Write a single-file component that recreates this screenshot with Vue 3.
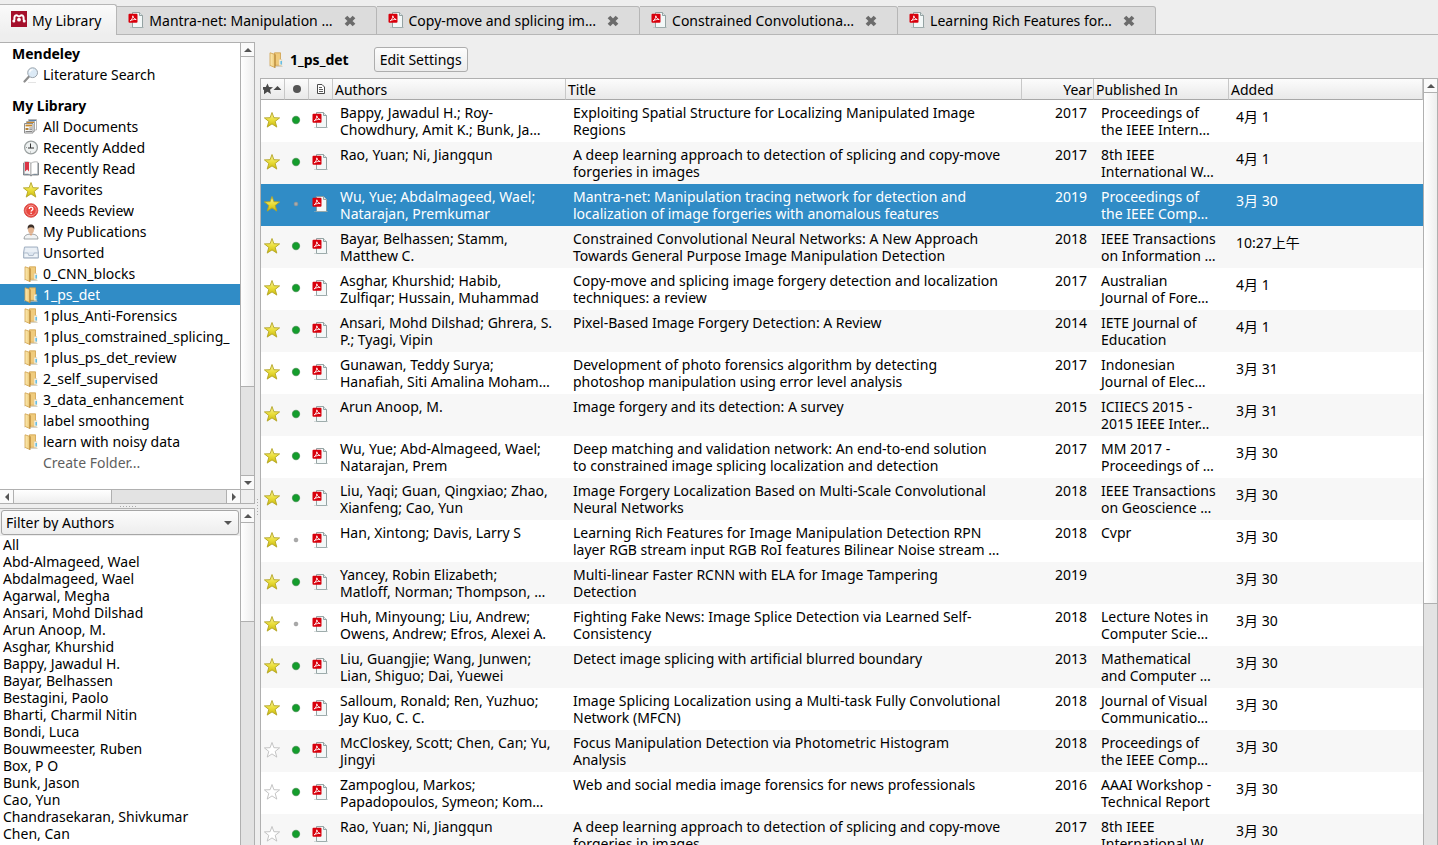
<template>
  <div class="app">
    <svg class="sprite" aria-hidden="true">
      <defs>
        <linearGradient id="g-star" x1="0" y1="0" x2="0" y2="1">
          <stop offset="0" stop-color="#f7f3a0" />
          <stop offset="0.5" stop-color="#ebdf3c" />
          <stop offset="1" stop-color="#c9b80c" />
        </linearGradient>
        <linearGradient id="g-folder" x1="0" y1="0" x2="1" y2="0">
          <stop offset="0" stop-color="#fdedb8" />
          <stop offset="1" stop-color="#ecc670" />
        </linearGradient>
        <radialGradient id="g-dot">
          <stop offset="0" stop-color="#12a02c" />
          <stop offset="0.7" stop-color="#159a2c" />
          <stop offset="1" stop-color="#7fa886" />
        </radialGradient>
        <radialGradient id="g-red">
          <stop offset="0" stop-color="#f04a40" />
          <stop offset="1" stop-color="#e2433c" />
        </radialGradient>
      </defs>
      <symbol id="i-logo" viewBox="0 0 16 16">
        <rect width="16" height="16" fill="#a50f2b" />
        <path d="M3.500 9C3 6 3.900 4.200 5.300 4.200S7.200 5.400 8 5.400s1.300-1.200 2.700-1.200S13 6 12.500 9" fill="none" stroke="#fff" stroke-width="2" />
        <circle cx="2.800" cy="9.900" r="1.500" fill="#fff" />
        <circle cx="8" cy="8.700" r="1.900" fill="#fff" />
        <circle cx="13.200" cy="9.900" r="1.500" fill="#fff" />
      </symbol>
      <symbol id="i-pdf" viewBox="0 0 16 16">
        <path d="M4.500 .5h7L14.500 3.500v12h-10z" fill="#f3f8f8" stroke="#8a9a9a" stroke-width=".9" />
        <path d="M11.500 .5v3h3" fill="#dfe8e8" stroke="#8a9a9a" stroke-width=".9" />
        <path d="M2 15.700h14" stroke="#a8b5b5" stroke-width=".6" />
        <rect x=".5" y="1.700" width="9" height="9" rx="1" fill="#d8000c" />
        <path d="M2.200 8.800C3.800 7.800 4.800 5.700 4.800 3.800c.5 2 1.500 3.200 3.400 3.700-2-.2-4 .2-6 1.300z" fill="none" stroke="#fff" stroke-width=".9" />
      </symbol>
      <symbol id="i-search" viewBox="0 0 16 16">
        <path d="M1.500 14.500 5.800 9.800" stroke="#8d8d8d" stroke-width="2.200" stroke-linecap="round" />
        <circle cx="9.600" cy="5.700" r="4.900" fill="#dceaf6" stroke="#9aa3ab" />
        <path d="M6.700 5.500a3 3 0 0 1 3-2.900" fill="none" stroke="#fff" stroke-width="1.200" />
        <path d="M5 15.500h8" stroke="#e4e4e4" />
      </symbol>
      <symbol id="i-docs" viewBox="0 0 16 16">
        <path d="M5.500 .5h8v10.500h-8z" fill="#fff" stroke="#b5b5b5" />
        <path d="M6 1.500h7" stroke="#5b7fa6" />
        <path d="M3.500 2.500h8v10h-8z" fill="#fff" stroke="#a9a9a9" />
        <path d="M4 3.500h7" stroke="#c98a2c" />
        <path d="M1.500 4.500h8.500v9.500h-8.500z" fill="#fafafa" stroke="#8f8f8f" />
        <path d="M2.500 6.500h6.500" stroke="#c98a2c" stroke-width="1.800" />
        <path d="M2.500 10h3" stroke="#b5853a" stroke-width="2" />
        <path d="M2.500 12.500h6.500M6.300 9h2.700M6.300 10.700h2.700" stroke="#777" stroke-width=".9" />
      </symbol>
      <symbol id="i-clock" viewBox="0 0 16 16">
        <circle cx="8" cy="7.500" r="6.400" fill="#eef1f1" stroke="#9ba1a1" stroke-width="1.300" />
        <path d="M7.500 3.500V8M5 8h6" stroke="#333" fill="none" />
        <path d="M7.500 11.500v1M3 7.500h1" stroke="#999" />
      </symbol>
      <symbol id="i-book" viewBox="0 0 16 16">
        <path d="M.5 2v12h6L8 15l1.500-1h6V2" fill="#5d86ad" stroke="#777" stroke-width=".8" />
        <path d="M1.200 1C4 .5 6.500 1 8 2.200v12C6 13 4 12.900 1.200 13.300z" fill="#f6f6f6" stroke="#999" stroke-width=".7" />
        <path d="M14.800 1C12 .5 9.500 1 8 2.200v12c2-1.200 4-1.300 6.800-.9z" fill="#fff" stroke="#999" stroke-width=".7" />
        <path d="M2 1h4v9.500L4.200 8.500 2 10.500z" fill="#db3545" />
      </symbol>
      <symbol id="i-star" viewBox="0 0 16 16">
        <path d="M8 .5 9.900 5.700l5.700.2-4.400 3.500 1.600 5.700L8 11.900l-4.800 3.200 1.600-5.700L.4 5.900l5.700-.2z" fill="url(#g-star)" stroke="#b3a524" stroke-width=".9" stroke-linejoin="round" />
      </symbol>
      <symbol id="i-star-off" viewBox="0 0 16 16">
        <path d="M8 .5 9.900 5.700l5.700.2-4.400 3.500 1.600 5.700L8 11.900l-4.800 3.200 1.600-5.700L.4 5.900l5.700-.2z" fill="#fff" stroke="#bdbdbd" stroke-width=".9" stroke-linejoin="round" />
      </symbol>
      <symbol id="i-help" viewBox="0 0 16 16">
        <circle cx="8" cy="7.500" r="6.800" fill="url(#g-red)" stroke="#d5403a" stroke-width=".8" />
        <circle cx="8" cy="7.500" r="5.300" fill="none" stroke="#f7a39e" stroke-width=".8" />
        <path d="M6.200 6C6.200 4.800 7 4.200 8 4.200s1.900.6 1.900 1.700c0 1.300-1.800 1.300-1.800 2.700M8.100 9.700v1.300" fill="none" stroke="#fff" stroke-width="1.300" />
      </symbol>
      <symbol id="i-user" viewBox="0 0 16 16">
        <path d="M1 15c0-3.500 2.500-4.500 5-4.800h4c2.500.3 5 1.300 5 4.800z" fill="#f1f3f4" stroke="#8b8f92" stroke-width=".8" />
        <path d="M6.300 9.500 8 12l1.700-2.500z" fill="#d9a27c" />
        <ellipse cx="8" cy="5.500" rx="3" ry="4" fill="#e3b491" />
        <path d="M4.800 5.500C4.200 2 5.600.6 8 .6s3.800 1.400 3.200 4.900C10.700 4 10 3.200 8 3.200s-2.700.8-3.200 2.300z" fill="#3d3029" />
      </symbol>
      <symbol id="i-tray" viewBox="0 0 16 16">
        <path d="M1.500 2h13l1 6v5H.5v-5z" fill="#dce5ef" stroke="#a3b1c2" />
        <path d="M2.500 4h11M2 6h12" stroke="#f8fafc" />
        <path d="M.8 8h4l1 2.500h4.400l1-2.500h4v4.700H.8z" fill="#eef3f8" stroke="#a3b1c2" stroke-width=".8" />
      </symbol>
      <symbol id="i-folder" viewBox="0 0 16 16">
        <path d="M6.500 .8h6v12.500h-6z" fill="#f0cb7c" stroke="#cf9f4a" stroke-width=".8" />
        <path d="M11 7.500h2.700v6H11z" fill="#f8f0dc" stroke="#d8c9a2" stroke-width=".5" />
        <path d="M12.500 9h1.300v3.500h-1.300z" fill="#45b4ec" />
        <path d="M2 .8 7 2.400v13.200L2 13.400z" fill="url(#g-folder)" stroke="#cf9f4a" stroke-width=".8" />
        <path d="M7 2.400v13.200" stroke="#a87c2f" stroke-width=".9" />
        <path d="M7.500 14.500h7M1 13.800h1" stroke="#c9c1ae" stroke-width=".7" />
      </symbol>
      <symbol id="i-close" viewBox="0 0 12 12">
        <path d="M2 2 10 10M10 2 2 10" stroke="#6b6b6b" stroke-width="3.800" />
      </symbol>
      <symbol id="i-page" viewBox="0 0 10 12">
        <path d="M1.500 1.500h4.500L8.500 4v6.500h-7z" fill="#fff" stroke="#4a4a4a" />
        <path d="M3 4.500h3M3 6.500h4M3 8.500h4" stroke="#4a4a4a" stroke-width=".9" />
      </symbol>
      <symbol id="i-read" viewBox="0 0 10 10">
        <circle cx="5" cy="5" r="4.200" fill="url(#g-dot)" />
      </symbol>
      <symbol id="i-unread" viewBox="0 0 10 10">
        <circle cx="5" cy="5" r="1.900" fill="#a9a9a9" stroke="#8f8f8f" stroke-width=".6" />
      </symbol>
    </svg>

    <nav class="tabs">
      <div class="tab active">
        <button type="button" class="tab-label">
          <svg class="icon"><use href="#i-logo" /></svg>
          <span>My Library</span>
        </button>
      </div>
      <div v-for="tab in tabs" :key="tab" class="tab">
        <button type="button" class="tab-label">
          <svg class="icon"><use href="#i-pdf" /></svg>
          <span>{{ tab }}</span>
        </button>
        <button type="button" class="tab-close" aria-label="Close tab">
          <svg><use href="#i-close" /></svg>
        </button>
      </div>
      <div class="tabs-rest"></div>
    </nav>

    <div class="body">
      <aside class="sidebar">
        <section class="panel tree-panel">
          <div class="panel-row">
            <div class="tree">
              <h2>Mendeley</h2>
              <button type="button" class="tree-item">
                <svg class="icon"><use href="#i-search" /></svg>
                <span>Literature Search</span>
              </button>
              <h2 class="spaced">My Library</h2>
              <button
                v-for="item in library"
                :key="item.label"
                type="button"
                class="tree-item"
                :class="{ selected: item.label === selectedFolder }"
                @click="selectedFolder = item.label"
              >
                <svg class="icon"><use :href="'#i-' + item.icon" /></svg>
                <span>{{ item.label }}</span>
              </button>
              <button type="button" class="tree-item create">
                <span>Create Folder...</span>
              </button>
            </div>
            <div class="scroll">
              <button type="button" class="arrow up" aria-label="Scroll up"></button>
              <div class="track"><div class="thumb tree-thumb"></div></div>
              <button type="button" class="arrow down" aria-label="Scroll down"></button>
            </div>
          </div>
          <div class="hscroll">
            <button type="button" class="arrow left" aria-label="Scroll left"></button>
            <div class="track"><div class="thumb"></div></div>
            <button type="button" class="arrow right" aria-label="Scroll right"></button>
            <div class="corner"></div>
          </div>
        </section>

        <div class="splitter"><i v-for="n in 6" :key="n"></i></div>

        <section class="panel filter-panel">
          <div class="filter">
            <div class="filter-head">
              <select v-model="filterBy" aria-label="Filter">
                <option>Filter by Authors</option>
                <option>Filter by Author Keywords</option>
                <option>Filter by My Tags</option>
                <option>Filter by Publications</option>
              </select>
            </div>
            <ul class="authors">
              <li v-for="name in authors" :key="name">
                <button type="button">{{ name }}</button>
              </li>
            </ul>
          </div>
          <div class="scroll">
            <button type="button" class="arrow up" aria-label="Scroll up"></button>
            <div class="track"><div class="thumb author-thumb"></div></div>
          </div>
        </section>
      </aside>

      <div class="vsplitter"><i v-for="n in 6" :key="n"></i></div>

      <main class="main">
        <header class="main-head">
          <svg class="icon"><use href="#i-folder" /></svg>
          <h1>{{ selectedFolder }}</h1>
          <button type="button" class="settings">Edit Settings</button>
        </header>

        <div class="grid">
          <div class="grid-view">
            <table>
              <colgroup>
                <col class="c-icon" />
                <col class="c-icon" />
                <col class="c-icon" />
                <col class="c-authors" />
                <col class="c-title" />
                <col class="c-year" />
                <col class="c-pub" />
                <col />
              </colgroup>
              <thead>
                <tr>
                  <th class="h-fav" aria-label="Favorite">
                    <svg class="h-star" viewBox="0 0 18 12">
                      <path d="M4.500 .5 6 4l4 .3-3 2.500 1 4.200-3.500-2.200L1 11.200 1 7 0 6.500V4h2.800z" fill="#4a4a4a" />
                      <path d="M10.500 7h8L14.500 3z" fill="#4a4a4a" />
                    </svg>
                  </th>
                  <th aria-label="Read">
                    <svg class="h-dot" viewBox="0 0 10 10"><circle cx="5" cy="5" r="4" fill="#555" /></svg>
                  </th>
                  <th aria-label="File">
                    <svg class="h-page"><use href="#i-page" /></svg>
                  </th>
                  <th>Authors</th>
                  <th>Title</th>
                  <th class="year">Year</th>
                  <th>Published In</th>
                  <th>Added</th>
                </tr>
              </thead>
              <tbody>
                <tr v-for="(doc, i) in documents" :key="i" :class="{ selected: i === selectedRow }" @click="selectedRow = i">
                  <td class="mark">
                    <button type="button" aria-label="Favorite" @click.stop="doc.fav = !doc.fav">
                      <svg class="star"><use :href="doc.fav ? '#i-star' : '#i-star-off'" /></svg>
                    </button>
                  </td>
                  <td class="mark">
                    <svg class="dot"><use :href="doc.read ? '#i-read' : '#i-unread'" /></svg>
                  </td>
                  <td class="mark">
                    <svg class="pdf"><use href="#i-pdf" /></svg>
                  </td>
                  <td><div class="lines">{{ doc.authors }}</div></td>
                  <td><div class="lines">{{ doc.title }}</div></td>
                  <td class="year">{{ doc.year }}</td>
                  <td><div class="lines">{{ doc.pub }}</div></td>
                  <td class="added">{{ doc.added }}</td>
                </tr>
              </tbody>
            </table>
          </div>
          <div class="scroll">
            <button type="button" class="arrow up" aria-label="Scroll up"></button>
            <div class="track"><div class="thumb grid-thumb"></div></div>
          </div>
        </div>
      </main>
    </div>
  </div>
</template>

<script setup>
import { ref } from 'vue';

const selectedFolder = ref('1_ps_det');
const selectedRow = ref(2);
const filterBy = ref('Filter by Authors');

const tabs = [
  'Mantra-net: Manipulation …',
  'Copy-move and splicing im…',
  'Constrained Convolutiona…',
  'Learning Rich Features for…'
];

const library = [
  { icon: 'docs', label: 'All Documents' },
  { icon: 'clock', label: 'Recently Added' },
  { icon: 'book', label: 'Recently Read' },
  { icon: 'star', label: 'Favorites' },
  { icon: 'help', label: 'Needs Review' },
  { icon: 'user', label: 'My Publications' },
  { icon: 'tray', label: 'Unsorted' },
  { icon: 'folder', label: '0_CNN_blocks' },
  { icon: 'folder', label: '1_ps_det' },
  { icon: 'folder', label: '1plus_Anti-Forensics' },
  { icon: 'folder', label: '1plus_comstrained_splicing_' },
  { icon: 'folder', label: '1plus_ps_det_review' },
  { icon: 'folder', label: '2_self_supervised' },
  { icon: 'folder', label: '3_data_enhancement' },
  { icon: 'folder', label: 'label smoothing' },
  { icon: 'folder', label: 'learn with noisy data' }
];

const authors = [
  'All',
  'Abd-Almageed, Wael',
  'Abdalmageed, Wael',
  'Agarwal, Megha',
  'Ansari, Mohd Dilshad',
  'Arun Anoop, M.',
  'Asghar, Khurshid',
  'Bappy, Jawadul H.',
  'Bayar, Belhassen',
  'Bestagini, Paolo',
  'Bharti, Charmil Nitin',
  'Bondi, Luca',
  'Bouwmeester, Ruben',
  'Box, P O',
  'Bunk, Jason',
  'Cao, Yun',
  'Chandrasekaran, Shivkumar',
  'Chen, Can',
  'Chen, Chen'
];

const documents = ref([
  { fav: true, read: true, authors: 'Bappy, Jawadul H.; Roy-\nChowdhury, Amit K.; Bunk, Ja…', title: 'Exploiting Spatial Structure for Localizing Manipulated Image\nRegions', year: 2017, pub: 'Proceedings of\nthe IEEE Intern…', added: '4月 1' },
  { fav: true, read: true, authors: 'Rao, Yuan; Ni, Jiangqun', title: 'A deep learning approach to detection of splicing and copy-move\nforgeries in images', year: 2017, pub: '8th IEEE\nInternational W…', added: '4月 1' },
  { fav: true, read: false, authors: 'Wu, Yue; Abdalmageed, Wael;\nNatarajan, Premkumar', title: 'Mantra-net: Manipulation tracing network for detection and\nlocalization of image forgeries with anomalous features', year: 2019, pub: 'Proceedings of\nthe IEEE Comp…', added: '3月 30' },
  { fav: true, read: true, authors: 'Bayar, Belhassen; Stamm,\nMatthew C.', title: 'Constrained Convolutional Neural Networks: A New Approach\nTowards General Purpose Image Manipulation Detection', year: 2018, pub: 'IEEE Transactions\non Information …', added: '10:27上午' },
  { fav: true, read: true, authors: 'Asghar, Khurshid; Habib,\nZulfiqar; Hussain, Muhammad', title: 'Copy-move and splicing image forgery detection and localization\ntechniques: a review', year: 2017, pub: 'Australian\nJournal of Fore…', added: '4月 1' },
  { fav: true, read: true, authors: 'Ansari, Mohd Dilshad; Ghrera, S.\nP.; Tyagi, Vipin', title: 'Pixel-Based Image Forgery Detection: A Review', year: 2014, pub: 'IETE Journal of\nEducation', added: '4月 1' },
  { fav: true, read: true, authors: 'Gunawan, Teddy Surya;\nHanafiah, Siti Amalina Moham…', title: 'Development of photo forensics algorithm by detecting\nphotoshop manipulation using error level analysis', year: 2017, pub: 'Indonesian\nJournal of Elec…', added: '3月 31' },
  { fav: true, read: true, authors: 'Arun Anoop, M.', title: 'Image forgery and its detection: A survey', year: 2015, pub: 'ICIIECS 2015 -\n2015 IEEE Inter…', added: '3月 31' },
  { fav: true, read: true, authors: 'Wu, Yue; Abd-Almageed, Wael;\nNatarajan, Prem', title: 'Deep matching and validation network: An end-to-end solution\nto constrained image splicing localization and detection', year: 2017, pub: 'MM 2017 -\nProceedings of …', added: '3月 30' },
  { fav: true, read: true, authors: 'Liu, Yaqi; Guan, Qingxiao; Zhao,\nXianfeng; Cao, Yun', title: 'Image Forgery Localization Based on Multi-Scale Convolutional\nNeural Networks', year: 2018, pub: 'IEEE Transactions\non Geoscience …', added: '3月 30' },
  { fav: true, read: false, authors: 'Han, Xintong; Davis, Larry S', title: 'Learning Rich Features for Image Manipulation Detection RPN\nlayer RGB stream input RGB RoI features Bilinear Noise stream …', year: 2018, pub: 'Cvpr', added: '3月 30' },
  { fav: true, read: true, authors: 'Yancey, Robin Elizabeth;\nMatloff, Norman; Thompson, …', title: 'Multi-linear Faster RCNN with ELA for Image Tampering\nDetection', year: 2019, pub: '', added: '3月 30' },
  { fav: true, read: false, authors: 'Huh, Minyoung; Liu, Andrew;\nOwens, Andrew; Efros, Alexei A.', title: 'Fighting Fake News: Image Splice Detection via Learned Self-\nConsistency', year: 2018, pub: 'Lecture Notes in\nComputer Scie…', added: '3月 30' },
  { fav: true, read: true, authors: 'Liu, Guangjie; Wang, Junwen;\nLian, Shiguo; Dai, Yuewei', title: 'Detect image splicing with artificial blurred boundary', year: 2013, pub: 'Mathematical\nand Computer …', added: '3月 30' },
  { fav: true, read: true, authors: 'Salloum, Ronald; Ren, Yuzhuo;\nJay Kuo, C. C.', title: 'Image Splicing Localization using a Multi-task Fully Convolutional\nNetwork (MFCN)', year: 2018, pub: 'Journal of Visual\nCommunicatio…', added: '3月 30' },
  { fav: false, read: true, authors: 'McCloskey, Scott; Chen, Can; Yu,\nJingyi', title: 'Focus Manipulation Detection via Photometric Histogram\nAnalysis', year: 2018, pub: 'Proceedings of\nthe IEEE Comp…', added: '3月 30' },
  { fav: false, read: true, authors: 'Zampoglou, Markos;\nPapadopoulos, Symeon; Kom…', title: 'Web and social media image forensics for news professionals', year: 2016, pub: 'AAAI Workshop -\nTechnical Report', added: '3月 30' },
  { fav: false, read: true, authors: 'Rao, Yuan; Ni, Jiangqun', title: 'A deep learning approach to detection of splicing and copy-move\nforgeries in images', year: 2017, pub: '8th IEEE\nInternational W…', added: '3月 30' }
]);
</script>

<style>
body {
  background: #eee;
}
</style>

<style scoped>
.app {
  display: flex;
  flex-direction: column;
  height: 100vh;
  overflow: hidden;
  background: #eee;
  color: #000;
  font-family: "Noto Sans", "Noto Sans CJK SC", sans-serif;
  font-size: 14px;
  line-height: 17px;
}
.app *,
.app *::before {
  box-sizing: border-box;
}
.sprite {
  position: absolute;
  width: 0;
  height: 0;
}
svg {
  display: block;
  flex: none;
}
.icon {
  width: 16px;
  height: 16px;
}
button {
  margin: 0;
  padding: 0;
  border: 0;
  background: none;
  color: inherit;
  font: inherit;
  text-align: left;
}
h1,
h2 {
  margin: 0;
  font-size: 14px;
  font-weight: 700;
}

/* tabs */
.tabs {
  display: flex;
  align-items: flex-end;
  height: 35px;
  flex: none;
}
.tab {
  display: flex;
  align-items: center;
  gap: 11px;
  height: 29px;
  padding: 0 20px 0 11px;
  border: 1px solid #b6b6b6;
  border-left: 0;
  border-radius: 0 3px 0 0;
  background: #dcdcdc;
  white-space: nowrap;
}
.tab.active {
  height: 31px;
  padding: 0 15px 0 11px;
  border-bottom: 0;
  background: linear-gradient(#fafafa, #eee);
}
.tab-label {
  display: flex;
  align-items: center;
  gap: 5px;
}
.tab-label .icon {
  margin-bottom: 2px;
}
.tab-close svg {
  width: 12px;
  height: 12px;
}
.tabs-rest {
  flex: 1;
  align-self: stretch;
  border-bottom: 1px solid #b6b6b6;
}

.body {
  display: flex;
  flex: 1;
  min-height: 0;
}
.sidebar {
  display: flex;
  flex-direction: column;
  flex: none;
  width: 255px;
  padding-top: 7px;
}
.panel {
  border-top: 1px solid #b0b0b0;
  border-right: 1px solid #b0b0b0;
  background: #fff;
}
.tree-panel {
  flex: none;
  border-bottom: 1px solid #b0b0b0;
}
.panel-row {
  display: flex;
}
.tree {
  flex: 1;
  min-width: 0;
  padding-bottom: 16px;
}
.tree h2 {
  padding: 2px 12px;
}
.tree h2.spaced {
  margin-top: 10px;
}
.tree-item {
  display: flex;
  align-items: center;
  gap: 4px;
  width: 100%;
  height: 21px;
  padding: 0 7px 0 23px;
  overflow: hidden;
  white-space: nowrap;
}
.tree-item span {
  overflow: hidden;
  line-height: 21px;
}
.tree-item.selected {
  background: #308cc6;
  color: #fff;
}
.tree-item.create {
  padding-left: 43px;
  color: #5f5f5f;
}

/* scroll bars */
.scroll {
  display: flex;
  flex-direction: column;
  flex: none;
  width: 14px;
  border-left: 1px solid #b0b0b0;
  background: #e3e3e3;
}
.arrow {
  display: flex;
  align-items: center;
  justify-content: center;
  flex: none;
  height: 14px;
  background: #fafafa;
}
.arrow::before {
  content: "";
  border: 4px solid transparent;
}
.arrow.up {
  border-bottom: 1px solid #b0b0b0;
}
.arrow.up::before {
  border-top-width: 0;
  border-bottom-color: #555;
}
.arrow.down {
  border-top: 1px solid #b0b0b0;
}
.arrow.down::before {
  border-bottom-width: 0;
  border-top-color: #555;
}
.track {
  flex: 1;
  min-height: 0;
}
.thumb {
  border-bottom: 1px solid #b0b0b0;
  background: linear-gradient(90deg, #fff, #eee);
}
.tree-thumb {
  height: 79%;
}
.author-thumb {
  height: 99px;
}
.grid-thumb {
  height: 68%;
}
.hscroll {
  display: flex;
  height: 14px;
  border-top: 1px solid #b0b0b0;
  background: #e3e3e3;
}
.hscroll .arrow {
  width: 14px;
  height: auto;
}
.hscroll .arrow.left {
  border-right: 1px solid #b0b0b0;
}
.arrow.left::before {
  border-left-width: 0;
  border-right-color: #555;
}
.hscroll .arrow.right {
  border-left: 1px solid #b0b0b0;
}
.arrow.right::before {
  border-right-width: 0;
  border-left-color: #555;
}
.hscroll .thumb {
  width: 46%;
  height: 100%;
  border-right: 1px solid #b0b0b0;
  border-bottom: 0;
  background: linear-gradient(#fff, #eee);
}
.corner {
  width: 14px;
  border-left: 1px solid #b0b0b0;
  background: #eee;
}
.splitter {
  display: flex;
  align-items: center;
  justify-content: center;
  gap: 2px;
  flex: none;
  height: 4px;
}
.splitter i,
.vsplitter i {
  width: 1px;
  height: 1px;
  background: #aaa;
}
.vsplitter {
  display: flex;
  flex-direction: column;
  align-items: center;
  justify-content: center;
  gap: 2px;
  flex: none;
  width: 5px;
  padding-top: 133px;
}

/* author filter */
.filter-panel {
  display: flex;
  flex: 1;
  min-height: 0;
}
.filter {
  flex: 1;
  min-width: 0;
  overflow: hidden;
}
.filter-head {
  padding: 1px;
  background: #eee;
}
select {
  display: block;
  width: 100%;
  height: 25px;
  padding: 0 4px;
  appearance: none;
  border: 1px solid #a6a6a6;
  border-radius: 3px;
  background:
    url("data:image/svg+xml,%3Csvg xmlns='http://www.w3.org/2000/svg' width='8' height='4'%3E%3Cpath d='M0 0h8L4 4z' fill='%23555'/%3E%3C/svg%3E") right 6px center no-repeat,
    linear-gradient(#fcfcfc, #ededed);
  color: #000;
  font: inherit;
}
.authors {
  margin: 0;
  padding: 0;
  list-style: none;
}
.authors button {
  display: block;
  width: 100%;
  padding: 0 3px;
  white-space: nowrap;
}

/* document list */
.main {
  display: flex;
  flex-direction: column;
  flex: 1;
  min-width: 0;
}
.main-head {
  display: flex;
  align-items: center;
  flex: none;
  gap: 6px;
  height: 43px;
  padding: 6px 8px 0;
}
.settings {
  height: 25px;
  margin-left: 19px;
  padding: 0 5px;
  border: 1px solid #adadad;
  border-radius: 3px;
  background: linear-gradient(#fdfdfd, #ececec);
}
.grid {
  display: flex;
  flex: 1;
  min-height: 0;
  border: 1px solid #b0b0b0;
  border-bottom: 0;
}
.grid-view {
  flex: 1;
  min-width: 0;
  overflow: hidden;
  background: #fff;
}
table {
  width: 100%;
  table-layout: fixed;
  border-collapse: separate;
  border-spacing: 0;
}
.c-icon {
  width: 24px;
}
.c-authors {
  width: 233px;
}
.c-title {
  width: 456px;
}
.c-year {
  width: 72px;
}
.c-pub {
  width: 135px;
}
th {
  height: 21px;
  padding: 0 2px;
  border-right: 1px solid #c8c8c8;
  border-bottom: 1px solid #a8a8a8;
  background: linear-gradient(#fcfcfc, #e9e9e9);
  font-weight: 400;
  text-align: left;
}
th.year {
  padding-right: 1px;
  text-align: right;
}
th svg {
  margin: 0 auto;
}
th.h-fav svg {
  margin: 0;
}
.h-star {
  width: 18px;
  height: 12px;
}
.h-dot {
  width: 10px;
  height: 10px;
}
.h-page {
  width: 10px;
  height: 12px;
}
td {
  height: 42px;
  padding: 4px 7px;
  vertical-align: top;
  white-space: nowrap;
}
td.year {
  text-align: right;
}
td.added {
  padding-top: 8px;
}
td.mark {
  padding: 0 2px 2px 0;
  vertical-align: middle;
}
td.mark svg {
  margin: 0 auto;
}
td.mark button {
  display: block;
  width: 100%;
}
.star,
.pdf {
  width: 16px;
  height: 16px;
}
.dot {
  width: 10px;
  height: 10px;
}
.lines {
  white-space: pre;
}
tbody tr:nth-child(even) {
  background: #f7f7f7;
}
tbody tr.selected {
  background: #308cc6;
  color: #fff;
}
</style>
